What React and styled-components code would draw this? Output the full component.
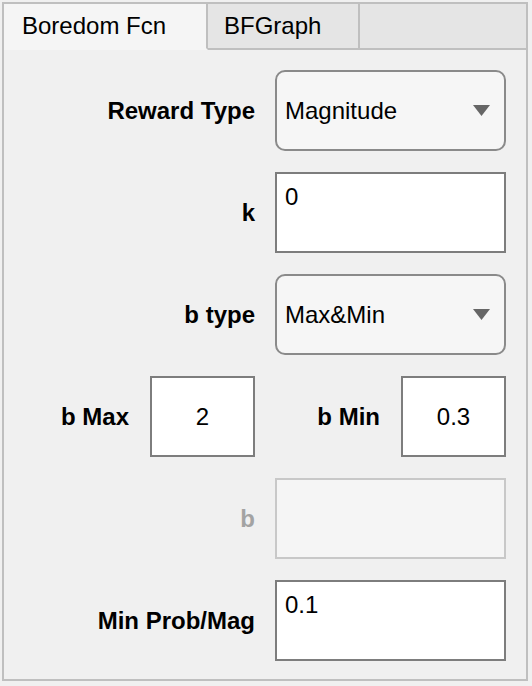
import React from "react";
import styled, { createGlobalStyle } from "styled-components";

const GlobalStyle = createGlobalStyle`
  html, body {
    margin: 0;
    padding: 0;
    background: #f0f0f0;
    font-family: "Liberation Sans", Arial, Helvetica, sans-serif;
  }
  * {
    box-sizing: border-box;
  }
`;

const Frame = styled.div`
  margin: 2px;
  width: 526px;
  height: 679px;
  border: 2px solid #bfbfbf;
  display: flex;
  flex-direction: column;
  background: #f0f0f0;
`;

const TabBar = styled.div`
  display: flex;
  height: 46px;
  flex-shrink: 0;
`;

const Tab = styled.div`
  width: ${(p) => p.$width}px;
  padding-left: ${(p) => p.$pad}px;
  display: flex;
  align-items: center;
  font-size: 24px;
  color: #000;
  background: ${(p) => (p.$active ? "#f5f5f5" : "#e5e5e5")};
  border-right: 2px solid #bfbfbf;
  border-bottom: ${(p) => (p.$active ? "2px solid transparent" : "2px solid #bfbfbf")};
`;

const TabFill = styled.div`
  flex: 1;
  background: #e5e5e5;
  border-bottom: 2px solid #bfbfbf;
`;

const Panel = styled.div`
  flex: 1;
  padding: 20px 20px 0 0;
  display: flex;
  flex-direction: column;
  gap: 21px;
`;

const Row = styled.div`
  display: grid;
  grid-template-columns: ${(p) => p.$cols || "1fr 231px"};
  column-gap: ${(p) => p.$gap || 20}px;
  align-items: center;
  height: 81px;
`;

const Label = styled.div`
  text-align: right;
  font-size: 24px;
  font-weight: 700;
  color: ${(p) => (p.$disabled ? "#a3a3a3" : "#000")};
`;

const DropDown = styled.div`
  height: 81px;
  border: 2px solid #8a8a8a;
  border-radius: 10px;
  background: #f6f6f6;
  display: flex;
  align-items: center;
  justify-content: space-between;
  padding: 0 14px 0 8px;
  font-size: 24px;
  color: #000;
`;

const Field = styled.div`
  height: 81px;
  border: 2px solid ${(p) => (p.$disabled ? "#c8c8c8" : "#7d7d7d")};
  background: ${(p) => (p.$disabled ? "#f5f5f5" : "#fff")};
  font-size: 24px;
  color: #000;
  display: flex;
  align-items: ${(p) => (p.$center ? "center" : "flex-start")};
  justify-content: ${(p) => (p.$center ? "center" : "flex-start")};
  padding: ${(p) => (p.$center ? "0" : "9px 8px")};
`;

const Caret = () => (
  <svg width="17" height="11" viewBox="0 0 17 11">
    <polygon points="0,0 17,0 8.5,11" fill="#666" />
  </svg>
);

const App = () => (
  <>
    <GlobalStyle />
    <Frame>
      <TabBar>
        <Tab $active $width={204} $pad={18}>Boredom Fcn</Tab>
        <Tab $width={152} $pad={16}>BFGraph</Tab>
        <TabFill />
      </TabBar>
      <Panel>
        <Row>
          <Label>Reward Type</Label>
          <DropDown>
            Magnitude
            <Caret />
          </DropDown>
        </Row>
        <Row>
          <Label>k</Label>
          <Field>0</Field>
        </Row>
        <Row>
          <Label>b type</Label>
          <DropDown>
            Max&amp;Min
            <Caret />
          </DropDown>
        </Row>
        <Row $cols="125px 105px 1fr 105px" $gap={21}>
          <Label>b Max</Label>
          <Field $center>2</Field>
          <Label>b Min</Label>
          <Field $center>0.3</Field>
        </Row>
        <Row>
          <Label $disabled>b</Label>
          <Field $disabled />
        </Row>
        <Row>
          <Label>Min Prob/Mag</Label>
          <Field>0.1</Field>
        </Row>
      </Panel>
    </Frame>
  </>
);

export default App;
